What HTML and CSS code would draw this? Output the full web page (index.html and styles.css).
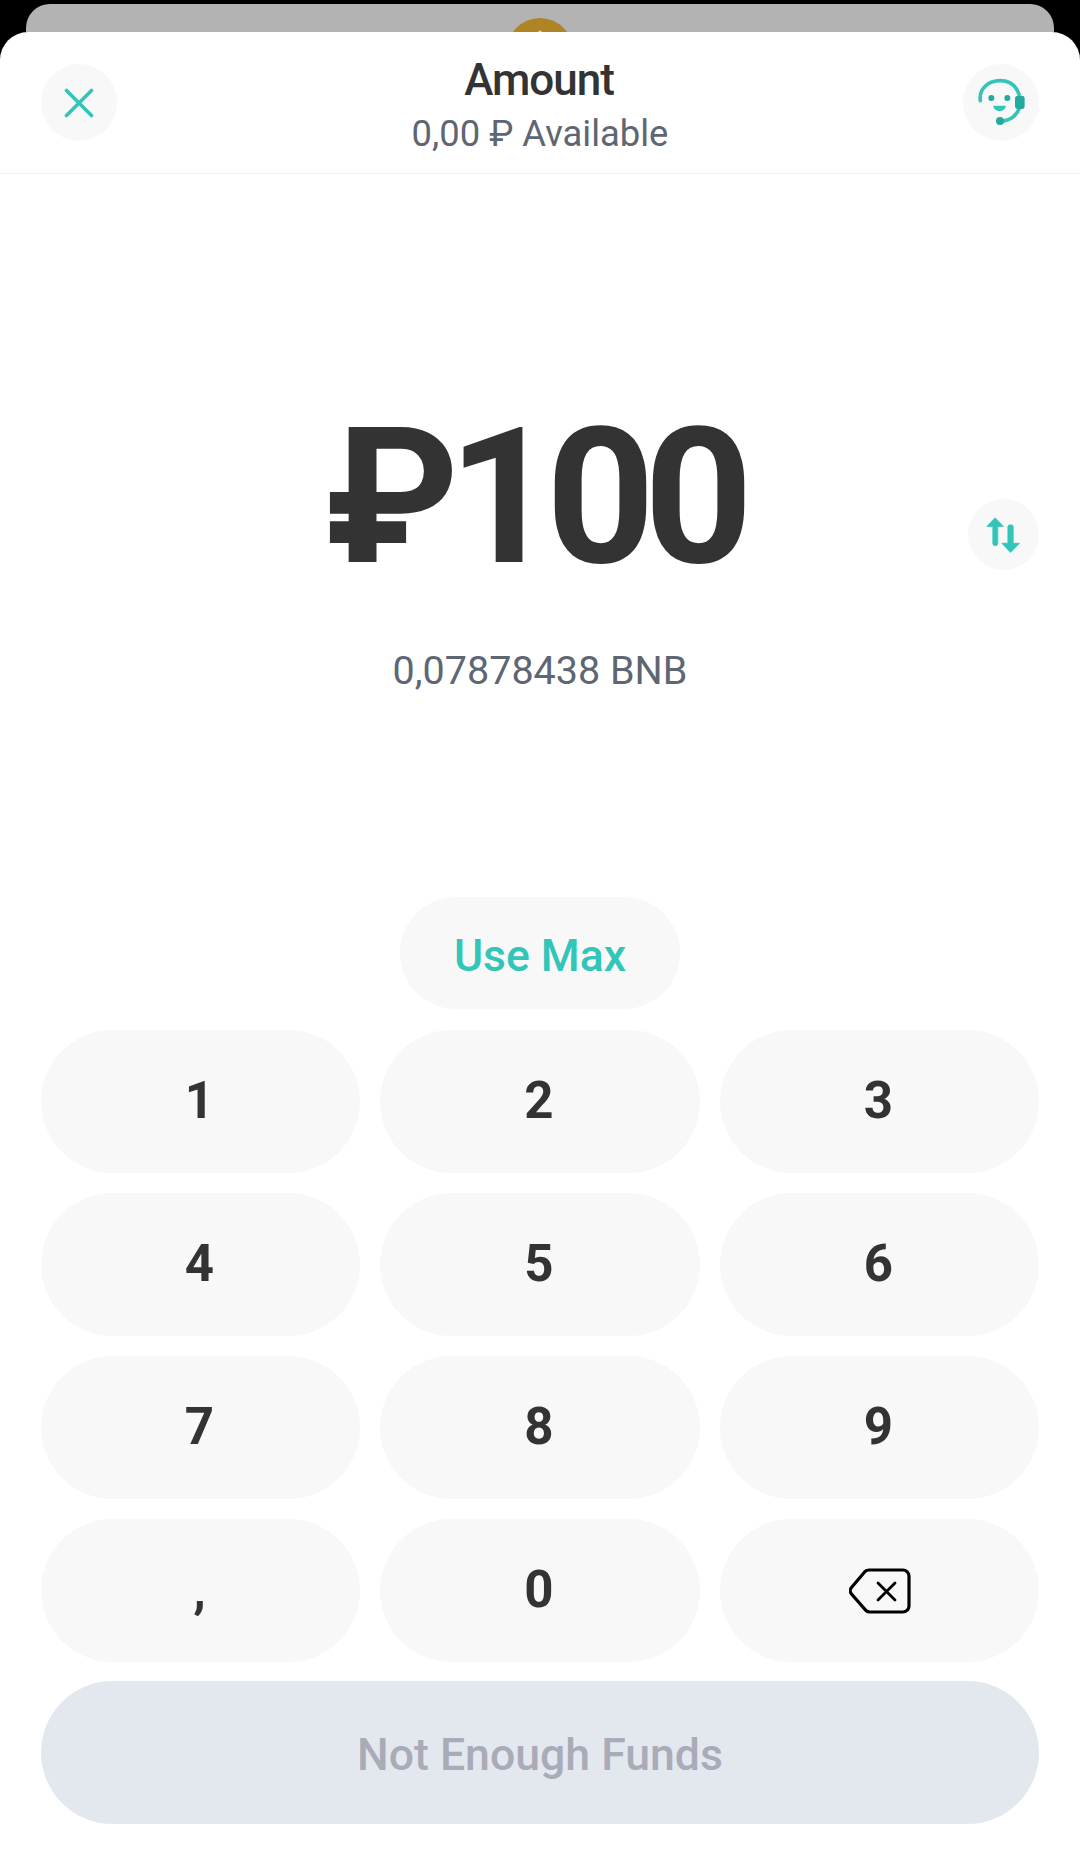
FILE: index.html
```html
<!DOCTYPE html>
<html lang="en">
<head>
<meta charset="utf-8">
<title>Amount</title>
<link rel="stylesheet" href="styles.css">
</head>
<body>
<div class="backdrop-card"><span class="coin"></span></div>
<main class="sheet">
  <header class="topbar">
    <button class="round-btn" aria-label="Close">
      <svg width="30" height="30" viewBox="0 0 30 30"><path d="M2.500 2.500 27.500 27.500M27.500 2.500 2.500 27.500" fill="none" stroke="#32c5b8" stroke-width="3.600" stroke-linecap="round"/></svg>
    </button>
    <div class="heading">
      <h1 class="title">Amount</h1>
      <p class="available">0,00 ₽ Available</p>
    </div>
    <button class="round-btn" aria-label="Support">
      <svg width="76" height="77" viewBox="39 45 228 231"><path d="M91 155C86 120 115 95 150 95C178 95 198 110 207 136M208 178C198 203 178 214 156 217" fill="none" stroke="#32c5b8" stroke-width="11" stroke-linecap="round"/><rect x="195" y="140" width="29" height="40" rx="9" fill="#23aa9b"/><circle cx="124" cy="147" r="9" fill="#23aa9b"/><circle cx="172" cy="147" r="9" fill="#23aa9b"/><path d="M130 170h37c1 8-8 16-18.500 16S129 178 130 170Z" fill="#32c5b8"/><circle cx="150" cy="216" r="12" fill="#23aa9b"/></svg>
    </button>
  </header>
  <section class="amount-area">
    <div class="amount-row">
      <span></span>
      <div class="amount">₽100</div>
      <button class="swap-btn" aria-label="Swap">
        <svg width="71" height="71" viewBox="24 28 212 212"><path d="M105 84 130 110H113V160a5 5 0 0 1-15 0V110H80ZM151 188 125 160H143V110a8 5 0 0 1 16 0V160H178Z" fill="#32c5b8" stroke="#32c5b8" stroke-width="2" stroke-linejoin="round"/></svg>
      </button>
    </div>
    <p class="crypto">0,07878438 BNB</p>
  </section>
  <button class="use-max">Use Max</button>
  <section class="keypad">
    <button class="key">1</button><button class="key">2</button><button class="key">3</button>
    <button class="key">4</button><button class="key">5</button><button class="key">6</button>
    <button class="key">7</button><button class="key">8</button><button class="key">9</button>
    <button class="key">,</button><button class="key">0</button>
    <button class="key key-icon" aria-label="Delete">
      <svg width="62" height="46" viewBox="0 0 62 46"><path d="M20 2H54a6 6 0 0 1 6 6V38a6 6 0 0 1-6 6H21a6 6 0 0 1-4-1.500L2.500 26a5 5 0 0 1 0-6.500L16 3.500A6 6 0 0 1 20 2Z" fill="none" stroke="#000" stroke-width="3.200"/><path d="M29 15 46 32M46 15 29 32" fill="none" stroke="#000" stroke-width="2.800" stroke-linecap="round"/></svg>
    </button>
  </section>
  <button class="submit" disabled>Not Enough Funds</button>
</main>
</body>
</html>
```
FILE: styles.css
```css
* { box-sizing: border-box; }
html, body { margin: 0; height: 100%; }
body {
  width: 1080px;
  height: 1865px;
  background: #000;
  overflow: hidden;
  font-family: Roboto, "Noto Sans", sans-serif;
  padding-top: 4px;
}
button { border: 0; padding: 0; font-family: inherit; }
.backdrop-card {
  height: 28px;
  margin: 0 26px;
  background: #b3b3b3;
  border-radius: 24px 24px 0 0;
  overflow: hidden;
  display: flex;
  justify-content: center;
  padding-top: 14px;
}
.coin {
  flex: none;
  width: 66px;
  height: 66px;
  border-radius: 50%;
  background: #ae8424;
  display: flex;
  justify-content: center;
  padding-top: 14px;
}
.coin::after {
  content: "";
  width: 10px;
  height: 10px;
  background: #d9d0b8;
  transform: rotate(45deg);
}
.sheet {
  height: 1833px;
  background: #fff;
  border-radius: 28px 28px 0 0;
  padding-bottom: 41px;
  display: flex;
  flex-direction: column;
  align-items: center;
}
.topbar {
  width: 100%;
  height: 142px;
  padding: 0 41px;
  border-bottom: 1px solid #efefef;
  display: flex;
  justify-content: space-between;
  align-items: flex-start;
}
.round-btn {
  width: 76px;
  height: 77px;
  margin-top: 32px;
  border-radius: 50%;
  background: #f8f8f8;
  display: flex;
  align-items: center;
  justify-content: center;
}
.heading { text-align: center; margin-top: 23px; }
.title {
  margin: 0;
  padding-right: 2px;
  font-size: 44px;
  line-height: 50px;
  font-weight: 500;
  letter-spacing: -1px;
  color: #333;
}
.available {
  margin: 8px 0 0;
  font-size: 36.4px;
  line-height: 42px;
  color: #5f6673;
}
.amount-area {
  width: 100%;
  flex: 1;
  padding: 229px 41px 0;
  display: flex;
  flex-direction: column;
  align-items: center;
}
.amount-row {
  width: 100%;
  display: grid;
  grid-template-columns: 1fr auto 1fr;
  align-items: end;
}
.amount {
  font-size: 190px;
  line-height: 188px;
  font-weight: 700;
  letter-spacing: -11px;
  padding-right: 13px;
  color: #333;
}
.swap-btn {
  justify-self: end;
  width: 71px;
  height: 71px;
  border-radius: 50%;
  background: #f8f8f8;
  margin-bottom: 21px;
}
.swap-btn svg { display: block; }
.crypto {
  margin: 58px 0 0;
  font-size: 39.5px;
  line-height: 44px;
  color: #5f6673;
}
.use-max {
  width: 280px;
  height: 112px;
  padding-top: 5px;
  border-radius: 56px;
  background: #f8f8f8;
  color: #32c5b8;
  font-size: 44.5px;
  font-weight: 500;
}
.keypad {
  width: 100%;
  margin-top: 21px;
  padding: 0 41px;
  display: grid;
  grid-template-columns: 319px 320px 319px;
  gap: 20px;
}
.key {
  height: 143px;
  padding: 0 2px 2px 0;
  border-radius: 72px;
  background: #f8f8f8;
  color: #333;
  font-size: 51px;
  font-weight: 700;
  display: flex;
  align-items: center;
  justify-content: center;
}
.key-icon { padding: 0; }
.submit {
  width: 998px;
  height: 143px;
  margin-top: 19px;
  padding-top: 5px;
  border-radius: 72px;
  background: #e3e8ef;
  color: #a9abb8;
  font-size: 44.6px;
  font-weight: 500;
}
```
